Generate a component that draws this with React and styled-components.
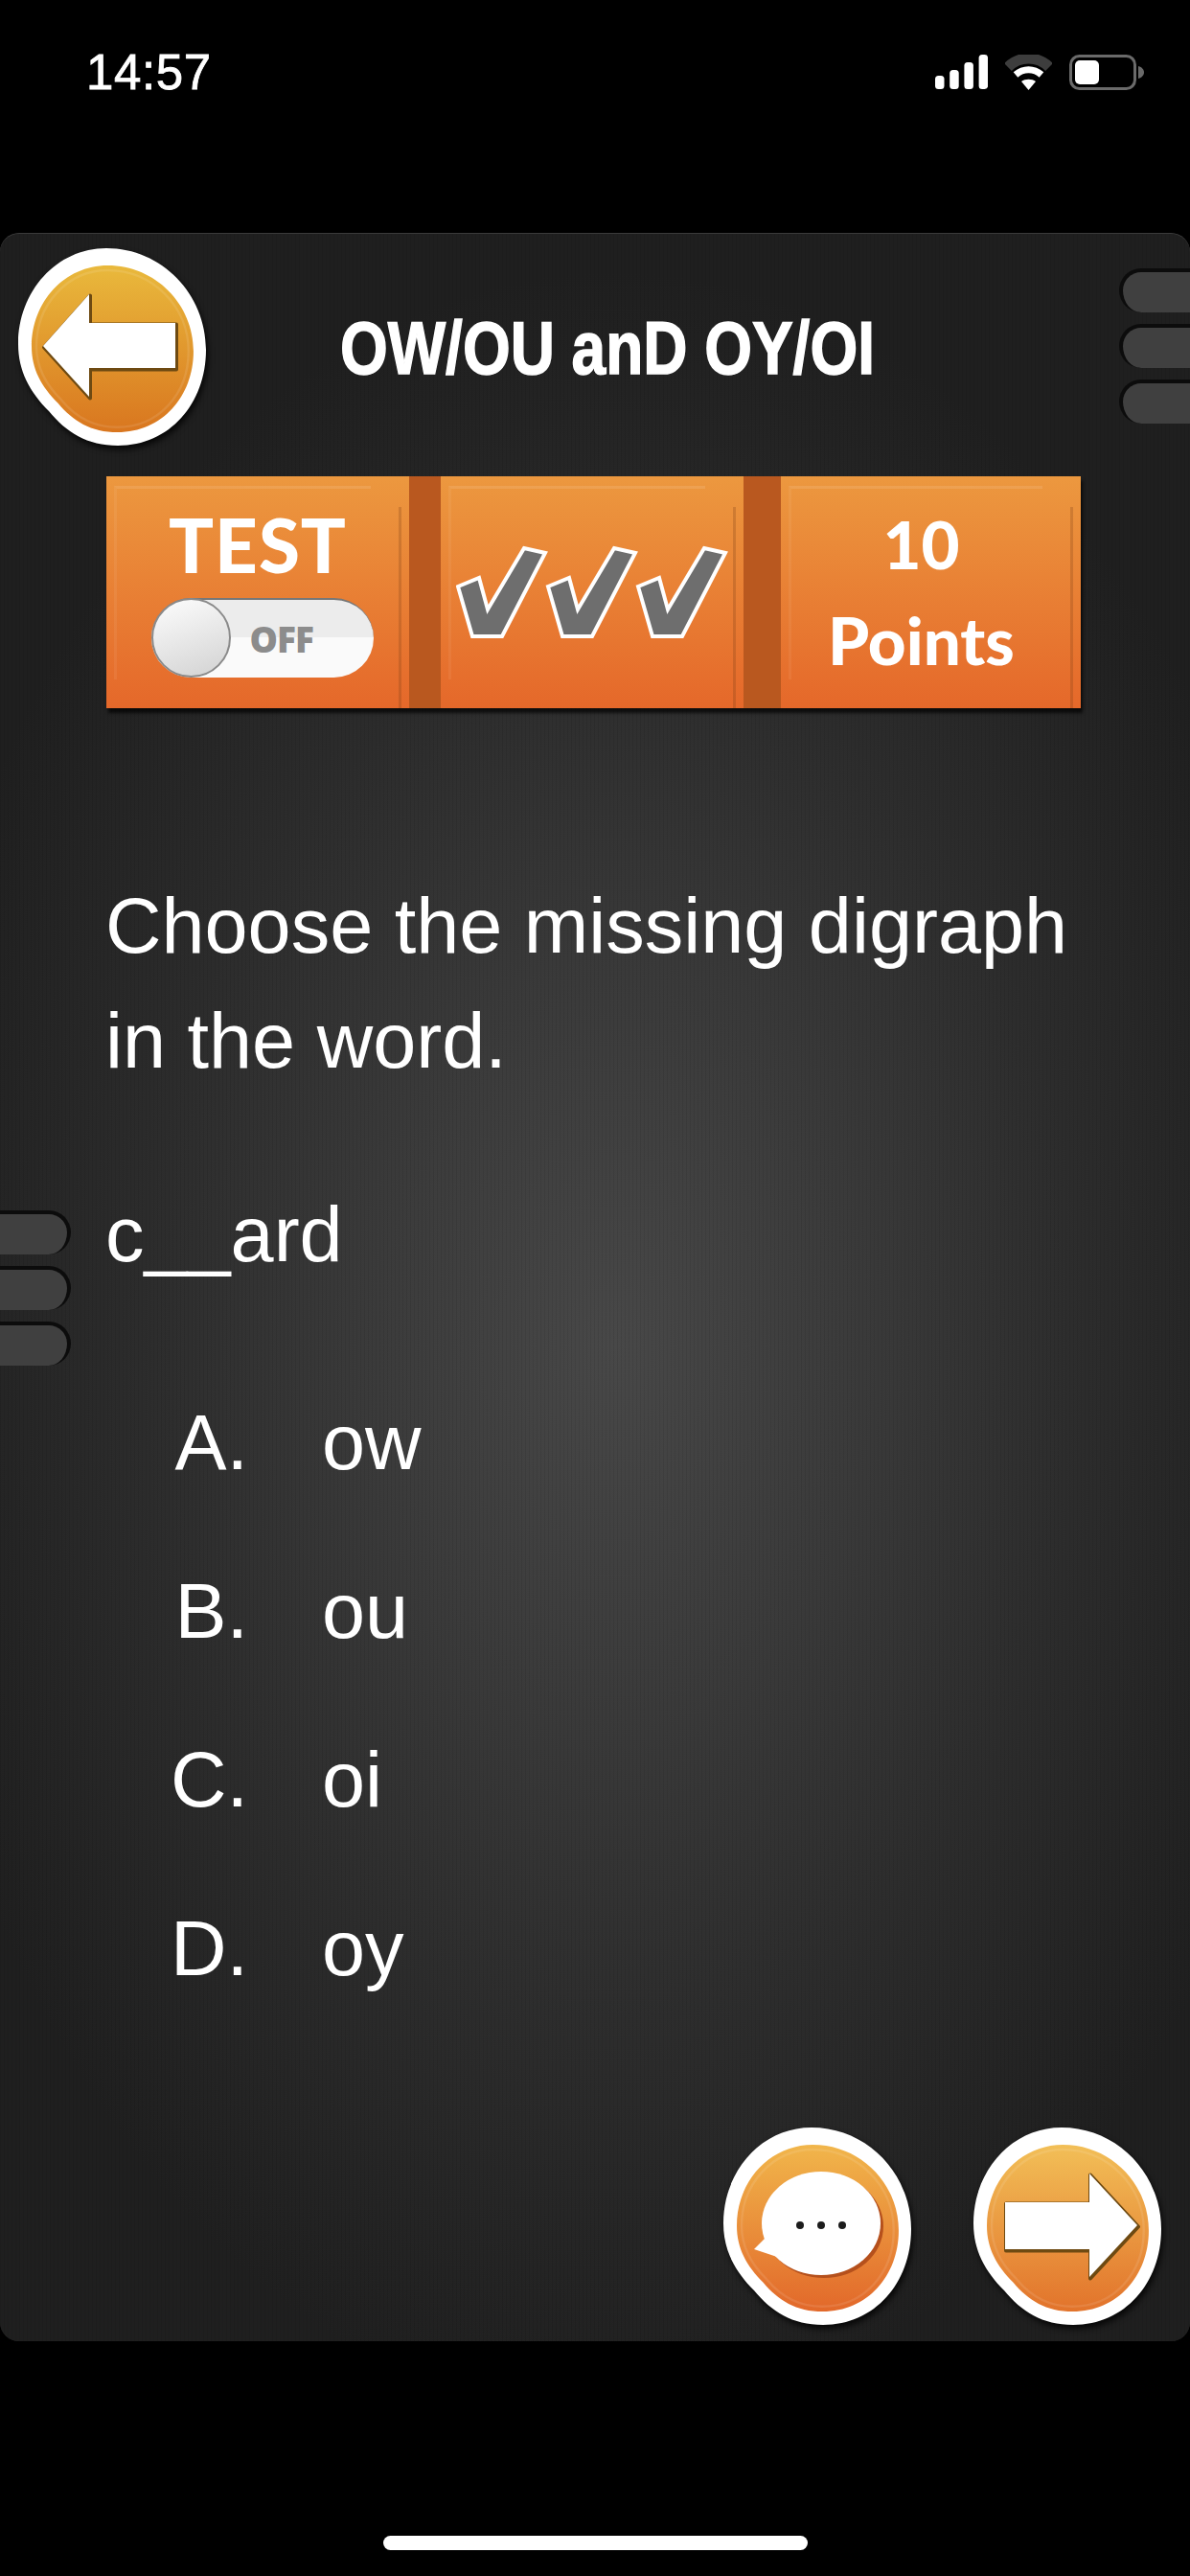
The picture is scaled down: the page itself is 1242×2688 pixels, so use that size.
import React from 'react';
import styled, { createGlobalStyle } from 'styled-components';

const GlobalStyle = createGlobalStyle`
  html, body {
    margin: 0;
    padding: 0;
    background: #000;
  }
`;

const Screen = styled.div`
  width: 1242px;
  height: 2688px;
  display: flex;
  flex-direction: column;
  background: #000;
  font-family: "Liberation Sans", Arial, sans-serif;
  color: #fff;
  overflow: hidden;
`;

const StatusBar = styled.div`
  height: 243px;
  box-sizing: border-box;
  padding: 47px 48px 0 90px;
  display: flex;
  justify-content: space-between;
  align-items: flex-start;
`;

const Clock = styled.div`
  font-size: 51px;
  line-height: 58px;
  letter-spacing: 0.6px;
  -webkit-text-stroke: 0.8px #fff;
`;

const StatusIcons = styled.div`
  display: flex;
  align-items: flex-start;
  gap: 18px;
  padding-top: 10px;
`;

const Panel = styled.main`
  position: relative;
  height: 2200px;
  box-sizing: border-box;
  padding-top: 15px;
  border-radius: 20px;
  overflow: hidden;
  border-top: 1px solid #3a3a3a;
  background-color: #222;
  background-image:
    repeating-linear-gradient(90deg, rgba(0, 0, 0, 0.08) 0 1px, transparent 1px 4px),
    radial-gradient(ellipse 760px 1120px at 640px 1160px, #484848 0%, #3c3c3c 30%, #2c2c2c 65%, #1f1f1f 100%);
`;

const NotchStack = styled.div`
  position: absolute;
  top: ${(p) => p.$top}px;
  ${(p) => p.$side}: 0;
  display: flex;
  flex-direction: column;
  gap: 12px;
`;

const Notch = styled.div`
  width: 70px;
  height: 42px;
  background: #404040;
  border-top: 4px solid #0c0c0c;
  border-${(p) => (p.$side === 'left' ? 'right' : 'left')}: 4px solid #0c0c0c;
  border-radius: ${(p) => (p.$side === 'left' ? '0 24px 24px 0' : '24px 0 0 24px')};
`;

const Header = styled.header`
  display: flex;
  align-items: center;
  padding-left: 19px;
`;

const Badge = styled.svg`
  display: block;
  flex: none;
  filter: drop-shadow(2px 4px 3px rgba(0, 0, 0, 0.8));
`;

const Title = styled.h1`
  margin: 0 0 0 139px;
  font-family: "Liberation Sans", Arial, sans-serif;
  font-size: 78px;
  line-height: 78px;
  font-weight: 700;
  white-space: nowrap;
  -webkit-text-stroke: 1.5px #fff;
  transform: scaleX(0.82);
  transform-origin: left center;
`;

const Tabs = styled.section`
  display: flex;
  width: 1017px;
  height: 242px;
  margin: 30px 0 0 111px;
  box-shadow: 2px 5px 3px rgba(0, 0, 0, 0.7);
`;

const Tab = styled.div`
  position: relative;
  width: ${(p) => p.$width}px;
  box-sizing: border-box;
  display: flex;
  flex-direction: column;
  align-items: center;
  justify-content: center;
  background: linear-gradient(#ec983f, #e5682a);

  &::before {
    content: '';
    position: absolute;
    top: 10px;
    left: 8px;
    right: 40px;
    bottom: 30px;
    border-top: 3px solid rgba(255, 255, 255, 0.1);
    border-left: 3px solid rgba(255, 255, 255, 0.06);
  }

  &::after {
    content: '';
    position: absolute;
    top: 32px;
    right: 8px;
    bottom: 0;
    width: 3px;
    background: rgba(120, 60, 20, 0.25);
  }
`;

const TabGap = styled.div`
  width: ${(p) => p.$width}px;
  background: #b9581f;
`;

const TestLabel = styled.div`
  font-family: Lato, "Open Sans", sans-serif;
  font-weight: 900;
  font-size: 78px;
  line-height: 78px;
  letter-spacing: 1px;
`;

const Toggle = styled.div`
  position: relative;
  width: 232px;
  height: 83px;
  margin: 17px 0 0 9px;
  box-sizing: border-box;
  padding-left: 103px;
  display: flex;
  align-items: center;
  border-radius: 42px;
  border-top: 2px solid #777;
  background: linear-gradient(#ececec 48%, #fafafa 48%);
`;

const Knob = styled.div`
  position: absolute;
  left: 0;
  top: -2px;
  width: 83px;
  height: 83px;
  box-sizing: border-box;
  border-radius: 50%;
  border: 2px solid #8a8a8a;
  background: linear-gradient(160deg, #fdfdfd, #d2d2d2);
`;

const ToggleText = styled.span`
  font-family: "Open Sans", sans-serif;
  font-weight: 800;
  font-size: 37px;
  letter-spacing: -1px;
  color: #8c8c8c;
`;

const PointsText = styled.div`
  padding-right: 20px;
  font-family: Lato, sans-serif;
  font-weight: 900;
  text-align: center;
  font-size: 69px;
  line-height: 100px;
`;

const Question = styled.section`
  padding: 167px 100px 0 110px;
`;

const Prompt = styled.p`
  margin: 0;
  font-size: 81px;
  line-height: 120px;
`;

const Word = styled.p`
  margin: 82px 0 0;
  font-size: 81px;
  line-height: 120px;
`;

const Options = styled.ol`
  list-style: none;
  margin: 69px 0 0;
  padding: 0;
`;

const Option = styled.li`
  display: grid;
  grid-template-columns: 149px auto;
  column-gap: 77px;
  font-size: 81px;
  line-height: 176px;
`;

const OptionKey = styled.span`
  text-align: right;
`;

const Actions = styled.div`
  position: absolute;
  right: 29px;
  bottom: 15px;
  display: flex;
  gap: 64px;
`;

const HomeBar = styled.div`
  margin: 203px auto 0;
  width: 443px;
  height: 15px;
  border-radius: 8px;
  background: #fff;
`;

const BLOB = 'M92 0C150 0 196 48 196 106C196 162 158 206 104 206C72 206 50 192 32 170C12 150 0 128 0 100C0 45 40 0 92 0Z';

const BadgeBase = ({ id, top, bottom, children }) => (
  <Badge width="197" height="208" viewBox="0 0 197 208">
    <defs>
      <linearGradient id={id} x1="0" y1="0" x2="0" y2="1">
        <stop offset="0" stopColor={top} />
        <stop offset="1" stopColor={bottom} />
      </linearGradient>
    </defs>
    <path d={BLOB} fill="#fff" />
    <path d={BLOB} fill={`url(#${id})`} transform="translate(14 18) scale(.862 .845)" />
    <path d={BLOB} fill="none" stroke="#fff" strokeOpacity=".1" strokeWidth="3" transform="translate(19 23) scale(.81 .795)" />
    {children}
  </Badge>
);

const Arrow = ({ d }) => (
  <>
    <path d={d} fill="#6e4a12" stroke="#6e4a12" strokeWidth="4" strokeLinejoin="round" transform="translate(1 1.5)" />
    <path d={d} fill="#fff" />
  </>
);

const BackIcon = () => (
  <BadgeBase id="back" top="#e9b93c" bottom="#d9761f">
    <Arrow d="M26 102L74 48V78H164V125H74V155Z" />
  </BadgeBase>
);

const NextIcon = () => (
  <BadgeBase id="next" top="#f2bf57" bottom="#e2732b">
    <Arrow d="M33 78H121V48L171 102L121 156V127H33Z" />
  </BadgeBase>
);

const ChatIcon = () => (
  <BadgeBase id="chat" top="#f1b64b" bottom="#e2682a">
    <ellipse cx="105" cy="103" rx="62" ry="54" fill="#b5501c" />
    <ellipse cx="102" cy="100" rx="62" ry="54" fill="#fff" />
    <path d="M43 116L32 127L56 135Z" fill="#fff" />
    <circle cx="80" cy="102" r="4" fill="#1c1c1c" />
    <circle cx="102" cy="102" r="4" fill="#1c1c1c" />
    <circle cx="124" cy="102" r="4" fill="#1c1c1c" />
  </BadgeBase>
);

const CheckMarks = () => (
  <svg width="284" height="98" viewBox="0 0 284 98">
    {[0, 94, 188].map((x) => (
      <path
        key={x}
        transform={`translate(${x} 0)`}
        d="M2 43L24 34L33 67L71 3L93 8L48 95H17Z"
        fill="#6e6e6e"
        stroke="#fff"
        strokeWidth="4"
      />
    ))}
  </svg>
);

const SignalIcon = () => (
  <svg width="55" height="36" viewBox="0 0 55 36">
    {[14, 20, 28, 36].map((h, i) => (
      <rect key={h} x={i * 15.2} y={36 - h} width="9.5" height={h} rx="3.5" fill="#fff" />
    ))}
  </svg>
);

const WifiIcon = () => (
  <svg width="49" height="37" viewBox="0 0 49 37">
    <path d="M3 13C15 1 34 1 46 13" fill="none" stroke="#3d3d3d" strokeWidth="11" />
    <path d="M11 21C19 14 30 14 38 21" fill="none" stroke="#fff" strokeWidth="7" />
    <path d="M24.5 37L17 28C21 25 28 25 32 28Z" fill="#fff" />
  </svg>
);

const BatteryIcon = () => (
  <svg width="78" height="37" viewBox="0 0 78 37">
    <rect x="1.5" y="1.5" width="67" height="34" rx="9" fill="none" stroke="#6a6a6a" strokeWidth="3" />
    <rect x="6" y="6" width="25" height="25" rx="5" fill="#fff" />
    <path d="M72 12C76 13 78 16 78 18.5C78 21 76 24 72 25Z" fill="#6a6a6a" />
  </svg>
);

const Notches = ({ side, top }) => (
  <NotchStack $side={side} $top={top}>
    <Notch $side={side} />
    <Notch $side={side} />
    <Notch $side={side} />
  </NotchStack>
);

const options = [
  { key: 'A.', text: 'ow' },
  { key: 'B.', text: 'ou' },
  { key: 'C.', text: 'oi' },
  { key: 'D.', text: 'oy' },
];

const App = () => {
  return (
    <Screen>
      <GlobalStyle />
      <StatusBar>
        <Clock>14:57</Clock>
        <StatusIcons>
          <SignalIcon />
          <WifiIcon />
          <BatteryIcon />
        </StatusIcons>
      </StatusBar>
      <Panel>
        <Notches side="right" top={36} />
        <Notches side="left" top={1019} />
        <Header>
          <BackIcon />
          <Title>OW/OU anD OY/OI</Title>
        </Header>
        <Tabs>
          <Tab $width={316}>
            <TestLabel>TEST</TestLabel>
            <Toggle>
              <Knob />
              <ToggleText>OFF</ToggleText>
            </Toggle>
          </Tab>
          <TabGap $width={33} />
          <Tab $width={316}>
            <CheckMarks />
          </Tab>
          <TabGap $width={39} />
          <Tab $width={313}>
            <PointsText>
              10
              <br />
              Points
            </PointsText>
          </Tab>
        </Tabs>
        <Question>
          <Prompt>
            Choose the missing digraph
            <br />
            in the word.
          </Prompt>
          <Word>c__ard</Word>
          <Options>
            {options.map((o) => (
              <Option key={o.key}>
                <OptionKey>{o.key}</OptionKey>
                <span>{o.text}</span>
              </Option>
            ))}
          </Options>
        </Question>
        <Actions>
          <ChatIcon />
          <NextIcon />
        </Actions>
      </Panel>
      <HomeBar />
    </Screen>
  );
};

export default App;
